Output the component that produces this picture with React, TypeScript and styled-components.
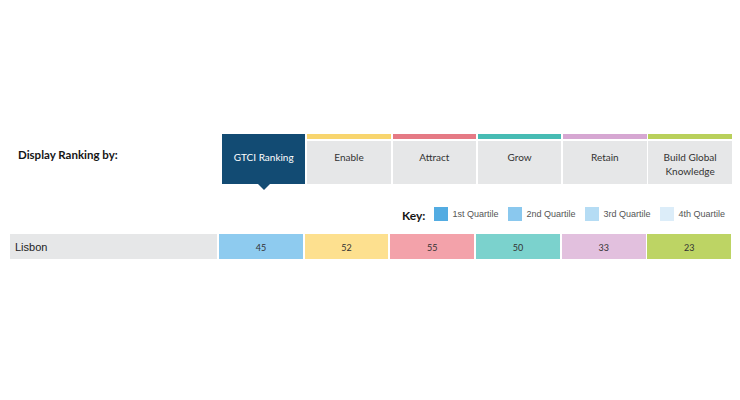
import React from 'react';
import styled, { createGlobalStyle, css } from 'styled-components';

const GlobalStyle = createGlobalStyle`
  html, body {
    margin: 0;
    padding: 0;
    background: #ffffff;
  }
  body {
    font-family: Lato, "Open Sans", sans-serif;
    color: #333333;
  }
`;

interface Pillar {
  label: string[];
  bar: string;
  cell: string;
}

const pillars: Pillar[] = [
  { label: ['Enable'], bar: '#f8d56e', cell: '#fde08f' },
  { label: ['Attract'], bar: '#e57a85', cell: '#f3a2aa' },
  { label: ['Grow'], bar: '#47bcb4', cell: '#7bd2cd' },
  { label: ['Retain'], bar: '#d6a7d2', cell: '#e2c0de' },
  { label: ['Build Global', 'Knowledge'], bar: '#b9d05b', cell: '#bdd464' },
];

const quartiles = [
  { label: '1st Quartile', color: '#53ace2' },
  { label: '2nd Quartile', color: '#8ac8ee' },
  { label: '3rd Quartile', color: '#b5dcf4' },
  { label: '4th Quartile', color: '#dcedf9' },
];

const scores = [
  { value: 45, color: '#8ecbef' },
  { value: 52, color: pillars[0].cell },
  { value: 55, color: pillars[1].cell },
  { value: 50, color: pillars[2].cell },
  { value: 33, color: pillars[3].cell },
  { value: 23, color: pillars[4].cell },
];

export default function App() {
  return (
    <>
      <GlobalStyle />
      <Page>
        <Header>
          <DisplayLabel>Display Ranking by:</DisplayLabel>
          <Tabs>
            <ActiveTab>GTCI Ranking</ActiveTab>
            {pillars.map(p => (
              <Tab key={p.label.join(' ')}>
                <TabBar color={p.bar} />
                <TabBody>
                  {p.label.map(line => <span key={line}>{line}</span>)}
                </TabBody>
              </Tab>
            ))}
          </Tabs>
        </Header>

        <KeyRow>
          <KeyTitle>Key:</KeyTitle>
          {quartiles.map(q => (
            <KeyItem key={q.label}>
              <Swatch color={q.color} />
              <KeyLabel>{q.label}</KeyLabel>
            </KeyItem>
          ))}
        </KeyRow>

        <DataRow>
          <CityCell>Lisbon</CityCell>
          <ScoreGrid>
            {scores.map((s, i) => (
              <ScoreCell key={i} color={s.color}>{s.value}</ScoreCell>
            ))}
          </ScoreGrid>
        </DataRow>
      </Page>
    </>
  );
}

const Page = styled.div`
  width: 740px;
  height: 400px;
  padding-top: 134px;
  box-sizing: border-box;
`;

const Header = styled.div`
  display: flex;
  align-items: flex-start;
`;

const DisplayLabel = styled.div`
  width: 222px;
  box-sizing: border-box;
  padding: 14px 0 0 18px;
  font-family: Lato, sans-serif;
  font-weight: 700;
  font-size: 11.5px;
  color: #151515;
`;

const Tabs = styled.div`
  display: grid;
  grid-template-columns: repeat(6, 83.4px);
  column-gap: 1.9px;
  height: 50px;
`;

const tabText = css`
  font-family: Lato, sans-serif;
  font-size: 10px;
  line-height: 14px;
  text-align: center;
`;

const ActiveTab = styled.div`
  ${tabText};
  position: relative;
  background: #124b73;
  color: #ffffff;
  padding-top: 16px;
  box-sizing: border-box;

  &::after {
    content: '';
    position: absolute;
    left: 50%;
    bottom: -6px;
    transform: translateX(-50%);
    border-left: 6px solid transparent;
    border-right: 6px solid transparent;
    border-top: 6px solid #124b73;
  }
`;

const Tab = styled.div`
  display: flex;
  flex-direction: column;
`;

const TabBar = styled.div<{ color: string }>`
  height: 5px;
  margin-bottom: 2px;
  background: ${props => props.color};
`;

const TabBody = styled.div`
  ${tabText};
  flex: 1;
  display: flex;
  flex-direction: column;
  align-items: center;
  padding-top: 9px;
  background: #e6e7e8;
  color: #333333;
`;

const KeyRow = styled.div`
  display: flex;
  align-items: center;
  justify-content: flex-end;
  gap: 10px;
  margin-top: 23px;
  padding-right: 15px;
  height: 14px;
`;

const KeyTitle = styled.div`
  font-family: Lato, sans-serif;
  font-weight: 700;
  font-size: 12px;
  color: #151515;
  margin-right: -1px;
  padding-top: 3px;
`;

const KeyItem = styled.div`
  display: flex;
  align-items: center;
  gap: 4px;
`;

const Swatch = styled.div<{ color: string }>`
  width: 14px;
  height: 14px;
  background: ${props => props.color};
`;

const KeyLabel = styled.div`
  font-family: "Liberation Sans", Arial, sans-serif;
  font-size: 9px;
  color: #555555;
`;

const DataRow = styled.div`
  display: flex;
  gap: 2px;
  margin-top: 13px;
  padding-left: 10px;
  height: 25px;
`;

const CityCell = styled.div`
  width: 207px;
  display: flex;
  align-items: center;
  padding-left: 5px;
  box-sizing: border-box;
  background: #e6e7e8;
  font-family: "Liberation Sans", Arial, sans-serif;
  font-size: 11px;
  color: #222222;
`;

const ScoreGrid = styled.div`
  display: grid;
  grid-template-columns: repeat(6, 83.8px);
  column-gap: 1.9px;
`;

const ScoreCell = styled.div<{ color: string }>`
  display: flex;
  align-items: center;
  justify-content: center;
  padding-top: 1px;
  background: ${props => props.color};
  font-family: Lato, sans-serif;
  font-size: 9px;
  color: #333333;
`;
